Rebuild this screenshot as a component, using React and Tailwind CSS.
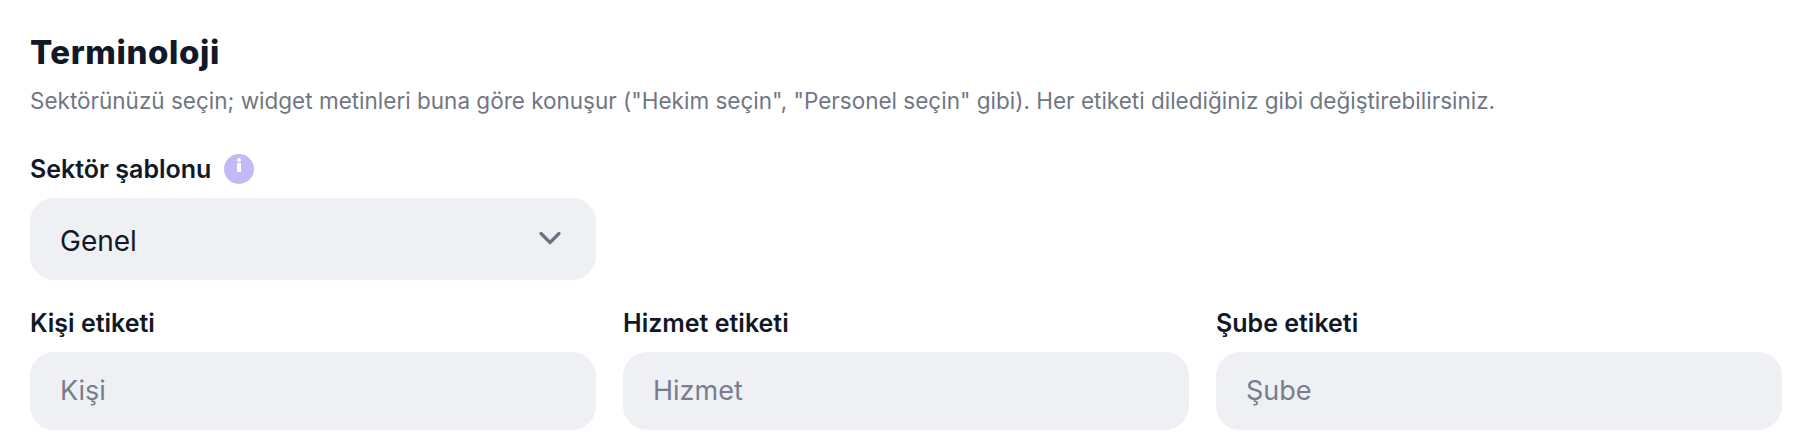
import React from 'react';
import { ChevronDown } from 'lucide-react';

const fields = [
  { label: 'Kişi etiketi', placeholder: 'Kişi' },
  { label: 'Hizmet etiketi', placeholder: 'Hizmet' },
  { label: 'Şube etiketi', placeholder: 'Şube' },
];

const App = () => {
  return (
    <div className="w-[1812px] h-[442px] bg-white px-[30px] pt-[30px] font-['Inter',sans-serif] overflow-hidden">
      <h2 className="text-[33px] leading-[44px] font-extrabold tracking-[0.6px] text-[#111827]">Terminoloji</h2>
      <p className="mt-[11px] text-[22.5px] leading-[32px] text-[#717684]">
        Sektörünüzü seçin; widget metinleri buna göre konuşur ("Hekim seçin", "Personel seçin" gibi). Her etiketi dilediğiniz gibi değiştirebilirsiniz.
      </p>

      <div className="mt-[35px] flex items-center gap-[13px] h-[34px]">
        <label className="text-[25px] font-semibold text-[#111827] translate-y-px">Sektör şablonu</label>
        <span className="w-[30px] h-[30px] rounded-full bg-[#c1baf5] flex justify-center pt-[4px]">
          <svg width="6" height="14" viewBox="0 0 6 14" fill="white">
            <circle cx="3" cy="2" r="2" />
            <rect x="1" y="5" width="4" height="9" rx="0.8" />
          </svg>
        </span>
      </div>
      <div className="mt-[12px] w-[566px] h-[82px] rounded-[24px] bg-[#eef0f4] flex items-center justify-between pl-[30px] pr-[28px]">
        <span className="text-[28px] text-[#111827] translate-y-[2px]">Genel</span>
        <ChevronDown className="w-[36px] h-[36px] text-[#6b7280] -translate-y-px" strokeWidth={2.2} />
      </div>

      <div className="mt-[26px] grid grid-cols-3 gap-x-[27px]">
        {fields.map((f) => (
          <div key={f.label}>
            <label className="block text-[25px] leading-[34px] font-semibold text-[#111827]">{f.label}</label>
            <div className="mt-[12px] h-[78px] rounded-[24px] bg-[#eef0f4] flex items-center pl-[30px] text-[27px] text-[#787e8e]">
              {f.placeholder}
            </div>
          </div>
        ))}
      </div>
    </div>
  );
};

export default App;
